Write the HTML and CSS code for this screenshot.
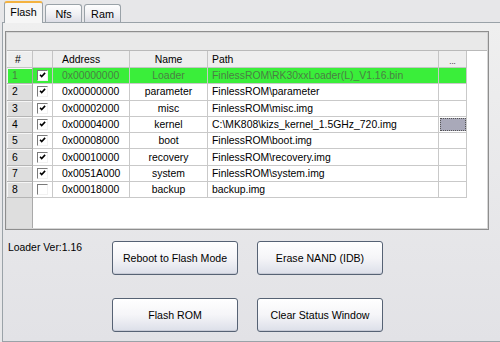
FILE: index.html
```html
<!DOCTYPE html>
<html lang="en">
<head>
  <meta charset="UTF-8" />
  <meta name="viewport" content="width=device-width, initial-scale=1.0"/>
  <title>Android Tool - Flash</title>
  <link rel="stylesheet" href="styles.css">
</head>
<body>

  <!-- tabs -->
  <div class="tabs">
    <div class="tab active">Flash</div>
    <div class="tab">Nfs</div>
    <div class="tab">Ram</div>
  </div>

  <div class="page">

    <!-- partition list -->
    <div class="grid">
      <div class="grid-band"></div>

      <div class="row head">
        <div class="cell num">#</div>
        <div class="cell chk"></div>
        <div class="cell addr">Address</div>
        <div class="cell name">Name</div>
        <div class="cell path">Path</div>
        <div class="cell more">...</div>
      </div>

      <div class="row sel">
        <div class="cell num">1</div>
        <div class="cell chk"><span class="box on"><svg viewBox="0 0 11 11"><path d="M2.5 4.5 L4.5 6.8 L8.7 2.3"/></svg></span></div>
        <div class="cell addr">0x00000000</div>
        <div class="cell name">Loader</div>
        <div class="cell path">FinlessROM\RK30xxLoader(L)_V1.16.bin</div>
        <div class="cell more"></div>
      </div>

      <div class="row">
        <div class="cell num">2</div>
        <div class="cell chk"><span class="box on"><svg viewBox="0 0 11 11"><path d="M2.5 4.5 L4.5 6.8 L8.7 2.3"/></svg></span></div>
        <div class="cell addr">0x00000000</div>
        <div class="cell name">parameter</div>
        <div class="cell path">FinlessROM\parameter</div>
        <div class="cell more"></div>
      </div>

      <div class="row">
        <div class="cell num">3</div>
        <div class="cell chk"><span class="box on"><svg viewBox="0 0 11 11"><path d="M2.5 4.5 L4.5 6.8 L8.7 2.3"/></svg></span></div>
        <div class="cell addr">0x00002000</div>
        <div class="cell name">misc</div>
        <div class="cell path">FinlessROM\misc.img</div>
        <div class="cell more"></div>
      </div>

      <div class="row">
        <div class="cell num">4</div>
        <div class="cell chk"><span class="box on"><svg viewBox="0 0 11 11"><path d="M2.5 4.5 L4.5 6.8 L8.7 2.3"/></svg></span></div>
        <div class="cell addr">0x00004000</div>
        <div class="cell name">kernel</div>
        <div class="cell path">C:\MK808\kizs_kernel_1.5GHz_720.img</div>
        <div class="cell more"><span class="pick"></span></div>
      </div>

      <div class="row">
        <div class="cell num">5</div>
        <div class="cell chk"><span class="box on"><svg viewBox="0 0 11 11"><path d="M2.5 4.5 L4.5 6.8 L8.7 2.3"/></svg></span></div>
        <div class="cell addr">0x00008000</div>
        <div class="cell name">boot</div>
        <div class="cell path">FinlessROM\boot.img</div>
        <div class="cell more"></div>
      </div>

      <div class="row">
        <div class="cell num">6</div>
        <div class="cell chk"><span class="box on"><svg viewBox="0 0 11 11"><path d="M2.5 4.5 L4.5 6.8 L8.7 2.3"/></svg></span></div>
        <div class="cell addr">0x00010000</div>
        <div class="cell name">recovery</div>
        <div class="cell path">FinlessROM\recovery.img</div>
        <div class="cell more"></div>
      </div>

      <div class="row">
        <div class="cell num">7</div>
        <div class="cell chk"><span class="box on"><svg viewBox="0 0 11 11"><path d="M2.5 4.5 L4.5 6.8 L8.7 2.3"/></svg></span></div>
        <div class="cell addr">0x0051A000</div>
        <div class="cell name">system</div>
        <div class="cell path">FinlessROM\system.img</div>
        <div class="cell more"></div>
      </div>

      <div class="row">
        <div class="cell num">8</div>
        <div class="cell chk"><span class="box"></span></div>
        <div class="cell addr">0x00018000</div>
        <div class="cell name">backup</div>
        <div class="cell path">backup.img</div>
        <div class="cell more"></div>
      </div>

      <div class="grid-fill"><div class="num"></div></div>
    </div>

    <!-- buttons -->
    <div class="controls">
      <div class="ver">Loader Ver:1.16</div>
      <button class="btn">Reboot to Flash Mode</button>
      <button class="btn">Erase NAND (IDB)</button>
      <div></div>
      <button class="btn">Flash ROM</button>
      <button class="btn">Clear Status Window</button>
    </div>

  </div>

</body>
</html>
```

FILE: styles.css
```css
body {
  margin: 0;
  width: 500px;
  height: 342px;
  overflow: hidden;
  background: #e7e7e9;
  font-family: 'Liberation Sans', Arial, sans-serif;
  font-size: 10.4px;
  color: #000;
}

/* tabs */
.tabs {
  display: flex;
  align-items: flex-end;
  gap: 2px;
  height: 22px;
  padding-left: 4px;
  position: relative;
  z-index: 1;
}

.tab {
  width: 37px;
  height: 18px;
  box-sizing: border-box;
  border: 1px solid #9aa2a8;
  border-bottom: none;
  border-radius: 3px 3px 0 0;
  background: linear-gradient(#fefefe, #f0f0f3 55%, #dcdde5);
  display: flex;
  align-items: center;
  justify-content: center;
  font-size: 10.8px;
}

.tab.active {
  width: 39px;
  height: 22px;
  margin-bottom: -1px;
  border-top: 2px solid #f4b23f;
  background: #f6f6f6;
  padding-bottom: 2px;
}

/* tab page */
.page {
  margin-left: 2px;
  height: 320px;
  box-sizing: border-box;
  border: 1px solid #9aa2a8;
  border-right: none;
  padding: 8px 0 0 2px;
  background: linear-gradient(#efefef, #e2e2e6);
}

/* grid */
.grid {
  width: 484px;
  height: 199px;
  box-sizing: border-box;
  border: 1px solid #8e8e8e;
  padding: 1px;
  box-shadow: inset 0 0 0 1px #d6d6d6;
  background: #fff;
  display: flex;
  flex-direction: column;
}

.grid-band {
  height: 18px;
  flex: none;
  box-sizing: border-box;
  background: #e9e9e9;
  border-bottom: 1px solid #b9b9b9;
}

.row {
  display: grid;
  grid-template-columns: 26px 20px 77px 78px 231px 28px 1fr;
  height: 16.3px;
  flex: none;
}

.row.head {
  height: 17px;
}

.cell {
  box-sizing: border-box;
  border-right: 1px solid #c9c9c9;
  border-bottom: 1px solid #c9c9c9;
  display: flex;
  align-items: center;
  white-space: nowrap;
  overflow: hidden;
}

.head .cell {
  background: #eeeeee;
  border-color: #c4c4c4;
}

.num {
  padding-left: 5px;
  background: #dedede;
  border-right: 1px solid #a9a9a9;
  border-bottom-color: #b4b4b4;
  box-shadow: inset 1px 1px 0 #f6f6f6;
}

.head .num {
  padding-left: 8px;
  background: #eeeeee;
}

.chk {
  padding-left: 4px;
}

.addr {
  padding-left: 9px;
}

.name {
  justify-content: center;
}

.path {
  padding-left: 4px;
}

.more {
  justify-content: center;
}

.head .more {
  align-items: flex-end;
  font-size: 8px;
  padding-bottom: 1px;
}

.pick {
  flex: 1;
  align-self: stretch;
  margin: 1px 0 1px 1px;
  background: #a9a9b9;
  border: 1px dotted #555;
}

.row.sel .cell {
  background: #3aee3a;
  color: #4a7f44;
}

.box {
  width: 11px;
  height: 11px;
  box-sizing: border-box;
  background: #fff;
  border-top: 1px solid #7a7a7a;
  border-left: 1px solid #7a7a7a;
  border-right: 1px solid #f2f2f2;
  border-bottom: 1px solid #f2f2f2;
  display: flex;
}

.box svg {
  width: 9px;
  height: 9px;
  fill: none;
  stroke: #000;
  stroke-width: 1.9;
}

.grid-fill {
  flex: 1;
  display: flex;
}

.grid-fill .num {
  width: 26px;
  box-sizing: border-box;
  box-shadow: none;
}

/* buttons */
.controls {
  display: grid;
  grid-template-columns: 85px 126px 126px;
  column-gap: 19px;
  row-gap: 23px;
  margin-top: 11px;
  padding-left: 3px;
}

.ver {
  padding-top: 1px;
  white-space: nowrap;
}

.btn {
  height: 34px;
  border: 1px solid #566274;
  border-radius: 3px;
  background: linear-gradient(#ffffff, #f5f5f8 50%, #dcdfe9);
  box-shadow: inset 0 -1px 0 #c8cbd6;
  font: inherit;
  font-size: 10.6px;
  color: #000;
  padding: 0;
  cursor: pointer;
}
```
